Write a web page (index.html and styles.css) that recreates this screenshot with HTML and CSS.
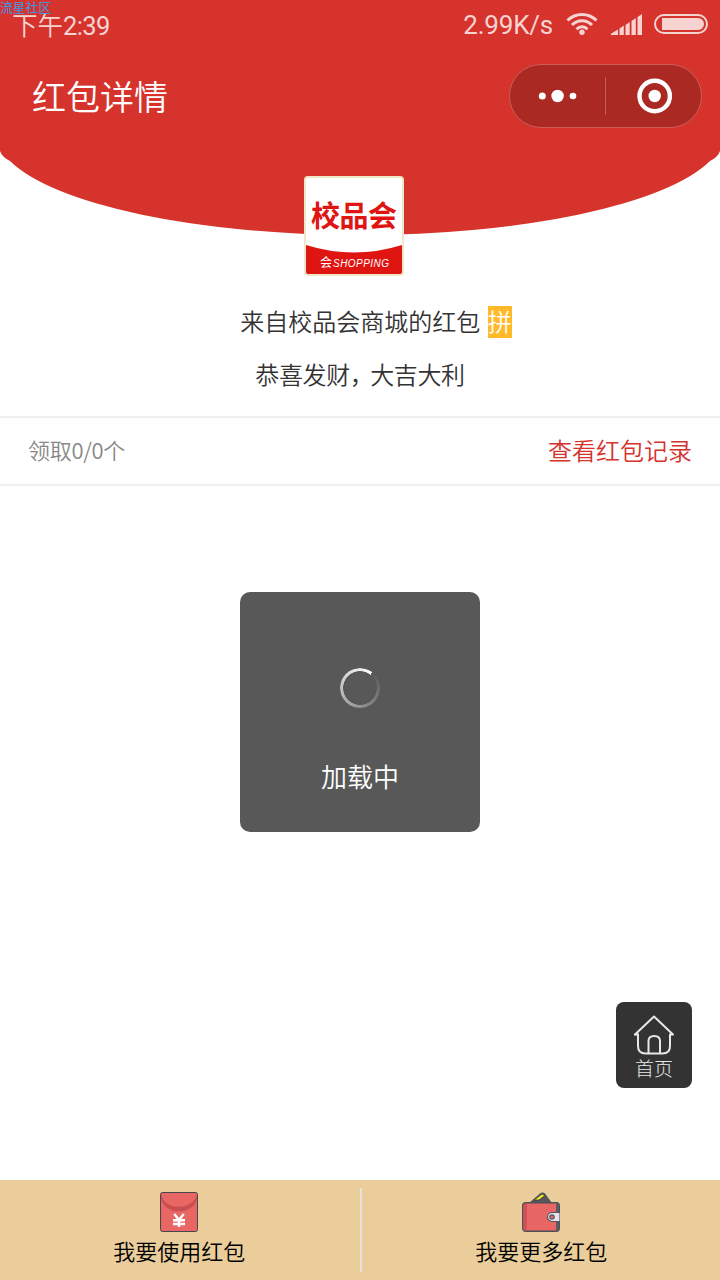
FILE: index.html
```html
<!DOCTYPE html>
<html lang="zh-CN">
<head>
    <meta charset="UTF-8">
    <meta name="viewport" content="width=device-width, initial-scale=1.0">
    <title>红包详情</title>
    <link rel="stylesheet" href="styles.css">
</head>
<body>
    <div class="page">
        <header class="header">
            <span class="watermark">流星社区</span>
            <div class="status-bar">
                <span class="time">下午<span class="digits">2:39</span></span>
                <span class="speed">2.99K/s</span>
                <svg class="wifi" width="32" height="24" viewBox="0 0 32 24" fill="none" stroke="#f7d3d1" stroke-width="3">
                    <path d="M1.5 8.5C9.5 0.5 22.5 0.5 30.5 8.5"/>
                    <path d="M6 13C11.5 7.3 20.5 7.3 26 13"/>
                    <path d="M10.5 17.2C13.5 14 18.5 14 21.5 17.2"/>
                    <circle cx="16" cy="20.3" r="2.7" fill="#f7d3d1" stroke="none"/>
                </svg>
                <svg class="signal" width="31" height="21" viewBox="0 0 31 21" fill="#f7d3d1">
                    <path d="M0 21V19.8L7 15.5V21zM8.5 21V14.5L12.8 11.5V21zM14.5 21V11L18.7 8V21zM20.5 21V7L24.8 4V21zM26.5 21V3L31 0V21z"/>
                </svg>
                <svg class="battery" width="54" height="20" viewBox="0 0 54 20">
                    <rect x="1" y="1" width="52" height="18" rx="9" fill="none" stroke="#f7d3d1" stroke-width="2"/>
                    <path d="M8 4H44a6 6 0 0 1 0 12H8z" fill="#f7d3d1"/>
                </svg>
            </div>
            <div class="nav">
                <h1>红包详情</h1>
                <div class="capsule">
                    <svg width="95" height="62" viewBox="0 0 95 62" fill="#fff">
                        <circle cx="32.3" cy="31" r="3.5"/>
                        <circle cx="47.6" cy="31" r="6.2"/>
                        <circle cx="63" cy="31" r="3.3"/>
                    </svg>
                    <span class="capsule-line"></span>
                    <svg width="95" height="62" viewBox="0 0 95 62">
                        <circle cx="48.7" cy="31" r="15.2" fill="none" stroke="#fff" stroke-width="4.4"/>
                        <circle cx="48.7" cy="31" r="6.2" fill="#fff"/>
                    </svg>
                </div>
            </div>
        </header>
        <svg class="curve" width="720" height="86" viewBox="0 0 720 86" fill="#d5332c">
            <path d="M0 0H720V1Q718 7 710 11A364 102 0 0 1 10 11Q2 7 0 1z"/>
        </svg>

        <!-- Shop info -->
        <section class="shop">
            <svg class="logo" width="100" height="100" viewBox="0 0 100 100">
                <rect x="1" y="1" width="98" height="98" rx="3" fill="#fff"/>
                <path d="M2 69Q50 84 98 69V98H2z" fill="#df1512"/>
                <rect x="1" y="1" width="98" height="98" rx="3" fill="none" stroke="#efe8c8" stroke-width="2"/>
                <text class="logo-name" x="7" y="51" textLength="86">校品会</text>
                <text class="logo-sub" x="16" y="91">会</text>
                <text class="logo-en" x="29" y="91" textLength="56">SHOPPING</text>
            </svg>
            <p class="from">来自校品会商城的红包 <span class="tag">拼</span></p>
            <p class="wish">恭喜发财<span class="comma">，</span>大吉大利</p>
        </section>

        <div class="record">
            <span class="count">领取0/0个</span>
            <a class="link">查看红包记录</a>
        </div>

        <!-- Loading toast -->
        <div class="toast">
            <div class="spinner"></div>
            <span>加载中</span>
        </div>

        <div class="home">
            <svg width="40" height="40" viewBox="0 0 40 40" fill="none" stroke="#e8e8e8" stroke-width="2" stroke-linejoin="round" stroke-linecap="round">
                <path d="M1 19.5L20 1.5L39 19.5H36V31Q36 38.5 28.5 38.5H11.5Q4 38.5 4 31V19.5"/>
                <path d="M1 19.5H4M14.5 38V26Q14.5 21 20.3 21Q26 21 26 26V38"/>
            </svg>
            <span>首页</span>
        </div>

        <footer class="footer">
            <div class="footer-item use">
                <svg width="38" height="40" viewBox="0 0 38 40">
                    <rect x="0.5" y="0.5" width="37" height="39" rx="2" fill="#e86765" stroke="#46464c"/>
                    <path d="M1 2C4 19 34 19 37 2V6C34 24 4 24 1 6z" fill="#c94e4f"/>
                    <path d="M14.3 22L19 28L23.7 22M19 28V35M13 28.2H25M13 32H25" fill="none" stroke="#fff" stroke-width="2.4"/>
                </svg>
                <span>我要使用红包</span>
            </div>
            <div class="footer-line"></div>
            <div class="footer-item">
                <svg width="38" height="40" viewBox="0 0 38 40">
                    <path d="M7 11L18 1.5Q20.5 -0.5 23 1.5L30 11z" fill="#56565b"/>
                    <path d="M12 8L20 2L23 3.5L17 8z" fill="#f4e62c" stroke="#393940" stroke-width="0.8"/>
                    <rect x="0.7" y="10.7" width="36.6" height="28.6" rx="3" fill="#e86765" stroke="#4f5057" stroke-width="1.4"/>
                    <path d="M1.4 14Q1.4 11.4 4 11.4H5V38.6H4Q1.4 38.6 1.4 36z" fill="#cf5354"/>
                    <path d="M34 11.4Q37 11.4 37 14V36Q37 38.6 34 38.6z" fill="#5c5d64"/>
                    <path d="M38 20.5H30a4.5 4.5 0 0 0 0 9H38z" fill="#e4e4ee" stroke="#55565e" stroke-width="1.2"/>
                    <circle cx="30" cy="25" r="2.2" fill="#e86765" stroke="#55565e" stroke-width="1.2"/>
                </svg>
                <span>我要更多红包</span>
            </div>
        </footer>
    </div>
</body>
</html>
```
FILE: styles.css
```css
* { box-sizing: border-box; }
body { margin: 0; background: #fff; color: #333; font-family: "Noto Sans CJK SC", sans-serif; font-weight: 350; }
p, h1 { margin: 0; }
svg { display: block; flex: none; }
.page { position: relative; width: 720px; height: 1280px; overflow: hidden; display: flex; flex-direction: column; }

.header { height: 150px; background: #d5332c; color: #fff; flex: none; }
.watermark { position: absolute; left: 0; top: 0; font-size: 12.8px; line-height: 13px; color: #3e97e8; font-weight: 400; }
.status-bar { display: flex; align-items: center; height: 50px; padding: 0 12px; color: #f7d3d1; }
.time { font-size: 25.5px; line-height: 36px; margin-top: -1px; }
.digits { font-family: Roboto, sans-serif; font-weight: 400; font-size: 25.5px; letter-spacing: -0.6px; }
.speed { margin: -1px 0 0 auto; font-family: Roboto, sans-serif; font-size: 26px; font-weight: 400; letter-spacing: -0.2px; }
.wifi { margin: -3px 0 0 13px; }
.signal { margin: -2px 0 0 13px; }
.battery { margin: -2px 0 0 12px; }
.nav { display: flex; align-items: center; justify-content: space-between; padding: 14px 18px 0 32px; }
.nav h1 { font-size: 34px; line-height: 50px; font-weight: 350; }
.capsule { display: flex; align-items: center; width: 193px; height: 64px; border: 1px solid #cb5c57; border-radius: 32px; background: #aa2923; }
.capsule-line { width: 1px; height: 38px; background: #c65d58; }
.curve { margin-bottom: -60px; }

.shop { display: flex; flex-direction: column; align-items: center; height: 240px; position: relative; flex: none; }
.logo { margin-right: 12px; }
.logo-name { font-size: 29px; font-weight: 700; fill: #df1512; }
.logo-sub { font-size: 12px; font-weight: 400; fill: #fff; }
.logo-en { font-family: "Liberation Sans", sans-serif; font-size: 10px; font-style: italic; fill: #fff; }
.from { margin: 28px 0 0 32px; font-size: 24px; line-height: 34px; word-spacing: 2px; }
.tag { display: inline-block; background: #ffb929; color: #fff; line-height: 30px; padding-bottom: 2px; }
.wish { margin-top: 19px; font-size: 24px; line-height: 34px; letter-spacing: -0.4px; }
.comma { letter-spacing: -3.5px; }

.record { display: flex; align-items: center; justify-content: space-between; height: 70px; padding: 0 28px 4px; border-top: 2px solid #efefef; border-bottom: 2px solid #efefef; flex: none; }
.count { font-size: 22px; color: #888; letter-spacing: -0.3px; }
.link { font-size: 24px; color: #d5332c; }

.toast { position: absolute; left: 240px; top: 592px; width: 240px; height: 240px; padding-top: 76px; border-radius: 10px; background: #585858; color: #fff; display: flex; flex-direction: column; align-items: center; font-size: 26px; line-height: 38px; }
.toast span { margin-top: 49px; }
.spinner { width: 40px; height: 40px; border-radius: 50%; background: conic-gradient(from 38deg, #585858, #8b8b8b 35%, #bbb 60%, #fff); -webkit-mask: radial-gradient(circle, transparent 16.5px, #000 17.2px); mask: radial-gradient(circle, transparent 16.5px, #000 17.2px); }

.home { position: absolute; right: 28px; top: 1002px; width: 76px; height: 86px; padding-top: 13px; border-radius: 8px; background: #333; color: #e8e8e8; display: flex; flex-direction: column; align-items: center; font-size: 19px; line-height: 26px; font-weight: 300; }

.footer { margin-top: auto; display: flex; align-items: center; height: 100px; background: #eacd9b; color: #000; flex: none; }
.footer-item { width: 358px; display: flex; flex-direction: column; align-items: center; font-size: 22px; line-height: 32px; }
.footer-item span { margin: 2px 0; }
.footer-item.use { width: 359px; }
.footer-item.use svg { margin-right: 1px; }
.footer-line { width: 2px; height: 84px; margin: 0 1px; background: #e5e2d9; }
```
